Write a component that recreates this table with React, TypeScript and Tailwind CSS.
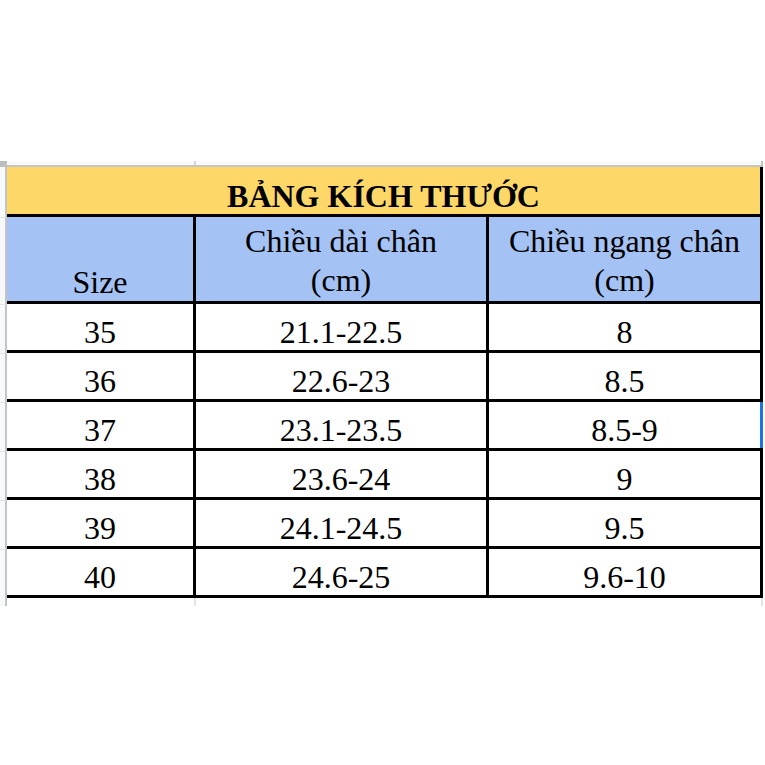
const rows = [
  ["35", "21.1-22.5", "8"],
  ["36", "22.6-23", "8.5"],
  ["37", "23.1-23.5", "8.5-9"],
  ["38", "23.6-24", "9"],
  ["39", "24.1-24.5", "9.5"],
  ["40", "24.6-25", "9.6-10"],
];

export default function App() {
  return (
    <div className="w-[765px] h-[765px] bg-white overflow-hidden text-black font-['Liberation_Serif','Times_New_Roman',serif]">
      <div className="h-[161px]" />
      <div className="flex">
        {/* Row gutter */}
        <div className="w-[7px] flex flex-col">
          <div className="h-[6px] bg-[#bdbdbd]" />
          <div className="h-[50px] bg-[#f8f9fa] border-r-2 border-[#c4c4c4]" />
          <div className="h-[87px] bg-[#f8f9fa] border-r-2 border-[#c4c4c4] border-t border-t-[#e3e3e3]" />
          {rows.map((r) => (
            <div
              key={r[0]}
              className="h-[49px] bg-[#f8f9fa] border-r-2 border-[#c4c4c4] border-t border-t-[#e3e3e3]"
            />
          ))}
          <div className="h-[8px] bg-[#f8f9fa] border-r-2 border-[#c4c4c4]" />
        </div>

        <div className="flex flex-col">
          {/* Column header strip */}
          <div className="flex h-[6px] bg-[#f8f9fa] border-b-2 border-[#c4c4c4]">
            <div className="w-[189px] border-r-2 border-[#d6d6d6]" />
            <div className="w-[293px]" />
            <div className="w-[274px] border-r-2 border-[#c4c4c4]" />
          </div>

          {/* Title */}
          <div className="w-[756px] h-[50px] bg-[#fdd868] border-b-[3px] border-r-[3px] border-black flex items-end justify-center pb-[3px]">
            <span className="text-[32px] leading-[30px] font-bold">BẢNG KÍCH THƯỚC</span>
          </div>

          {/* Header */}
          <div className="flex h-[87px] bg-[#a4c2f4] border-b-[3px] border-black">
            <div className="w-[189px] border-r-[3px] border-black flex items-end justify-center">
              <span className="text-[32px] leading-[38px]">Size</span>
            </div>
            <div className="w-[293px] border-r-[3px] border-black flex items-end justify-center pb-[1px]">
              <span className="text-[32px] leading-[39px] text-center">
                Chiều dài chân
                <br />
                (cm)
              </span>
            </div>
            <div className="w-[274px] border-r-[3px] border-black flex items-end justify-center pb-[1px]">
              <span className="text-[32px] leading-[39px] text-center whitespace-nowrap">
                Chiều ngang chân
                <br />
                (cm)
              </span>
            </div>
          </div>

          {/* Data rows */}
          {rows.map((r) => (
            <div key={r[0]} className="flex h-[49px] border-b-[3px] border-black">
              <div className="w-[189px] border-r-[3px] border-black flex items-end justify-center pb-[3px]">
                <span className="text-[32px] leading-[30px]">{r[0]}</span>
              </div>
              <div className="w-[293px] border-r-[3px] border-black flex items-end justify-center pb-[3px]">
                <span className="text-[32px] leading-[30px]">{r[1]}</span>
              </div>
              <div
                className={
                  r[0] === "37"
                    ? "w-[274px] border-r-[3px] border-[#1a73e8] flex items-end justify-center pb-[3px]"
                    : "w-[274px] border-r-[3px] border-black flex items-end justify-center pb-[3px]"
                }
              >
                <span className="text-[32px] leading-[30px]">{r[2]}</span>
              </div>
            </div>
          ))}

          <div className="flex h-[8px]">
            <div className="w-[189px] border-r-2 border-[#e3e3e3]" />
            <div className="w-[293px]" />
            <div className="w-[274px] border-r-2 border-[#e3e3e3]" />
          </div>
        </div>
      </div>
    </div>
  );
}
